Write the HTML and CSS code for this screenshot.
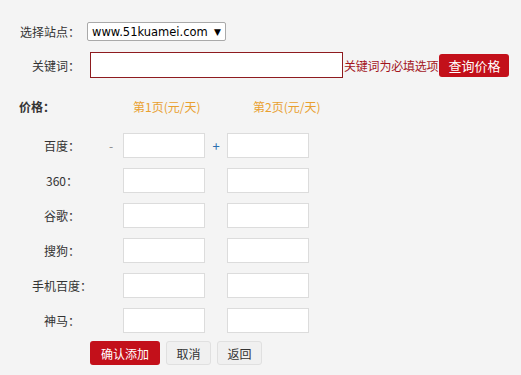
FILE: index.html
```html
<!DOCTYPE html>
<html lang="zh-CN">
<head>
    <meta charset="UTF-8">
    <title>添加关键词</title>
    <link rel="stylesheet" href="styles.css">
</head>
<body>
<div class="form">
    <div class="field site-row">
        <label class="field-label">选择站点：</label>
        <div class="select-box">
            <span>www.51kuamei.com</span>
            <span class="arrow">▼</span>
        </div>
    </div>

    <div class="field keyword-row">
        <label class="field-label">关键词：</label>
        <input type="text" class="keyword-input">
        <span class="keyword-tip">关键词为必填选项</span>
        <button class="btn btn-red btn-query">查询价格</button>
    </div>

    <div class="price-head">
        <span class="price-title">价格：</span>
        <span class="page-col">第1页(元/天)</span>
        <span class="page-col">第2页(元/天)</span>
    </div>

    <div class="price-list">
        <div class="price-row">
            <span class="engine">百度：</span>
            <span class="sign sign-first minus">-</span>
            <input type="text" class="price-input">
            <span class="sign sign-mid plus">+</span>
            <input type="text" class="price-input">
        </div>
        <div class="price-row">
            <span class="engine">360：</span>
            <span class="sign sign-first"></span>
            <input type="text" class="price-input">
            <span class="sign sign-mid"></span>
            <input type="text" class="price-input">
        </div>
        <div class="price-row">
            <span class="engine">谷歌：</span>
            <span class="sign sign-first"></span>
            <input type="text" class="price-input">
            <span class="sign sign-mid"></span>
            <input type="text" class="price-input">
        </div>
        <div class="price-row">
            <span class="engine">搜狗：</span>
            <span class="sign sign-first"></span>
            <input type="text" class="price-input">
            <span class="sign sign-mid"></span>
            <input type="text" class="price-input">
        </div>
        <div class="price-row">
            <span class="engine">手机百度：</span>
            <span class="sign sign-first"></span>
            <input type="text" class="price-input">
            <span class="sign sign-mid"></span>
            <input type="text" class="price-input">
        </div>
        <div class="price-row">
            <span class="engine">神马：</span>
            <span class="sign sign-first"></span>
            <input type="text" class="price-input">
            <span class="sign sign-mid"></span>
            <input type="text" class="price-input">
        </div>
    </div>

    <div class="actions">
        <button class="btn btn-red btn-add">确认添加</button>
        <button class="btn btn-gray">取消</button>
        <button class="btn btn-gray">返回</button>
    </div>
</div>
</body>
</html>
```

FILE: styles.css
```css
body {
    margin: 0;
    background-color: #f4f4f4;
    font-family: "Noto Sans CJK SC", "DejaVu Sans", sans-serif;
    font-size: 12px;
    color: #333;
}
.form {
    padding-top: 22px;
}
.field {
    display: flex;
    align-items: center;
}
.field-label {
    width: 80px;
    text-align: right;
    color: #333;
}
.select-box {
    display: flex;
    align-items: center;
    justify-content: space-between;
    box-sizing: border-box;
    width: 139px;
    height: 19px;
    margin-left: 7px;
    padding: 0 4px;
    background-color: #fff;
    border: 1px solid #a9a9a9;
    border-radius: 2px;
    font-family: "DejaVu Sans", sans-serif;
    font-size: 11.5px;
    color: #000;
}
.select-box .arrow {
    font-size: 9px;
}
.keyword-row {
    margin-top: 11px;
}
.keyword-input {
    box-sizing: border-box;
    width: 253px;
    height: 26px;
    margin: 0 0 0 10px;
    border: 1px solid #8e1b1f;
    background-color: #fff;
    outline: none;
}
.keyword-tip {
    margin-left: 1px;
    color: #a3141c;
    font-size: 12px;
    letter-spacing: -0.2px;
}
.btn {
    box-sizing: border-box;
    height: 24px;
    padding: 0;
    border-radius: 3px;
    font-family: "Noto Sans CJK SC", sans-serif;
    font-size: 12px;
    cursor: pointer;
}
.btn-red {
    background-color: #c3101a;
    color: #fff;
    border: none;
}
.btn-query {
    width: 70px;
    height: 23px;
    margin-left: 1px;
    font-size: 13px;
}
.price-head {
    display: flex;
    align-items: center;
    margin-top: 20px;
    height: 16px;
}
.price-title {
    width: 114px;
    padding-left: 19px;
    font-weight: bold;
    color: #333;
}
.page-col {
    width: 120px;
    color: #e9a02f;
}
.price-list {
    display: flex;
    flex-direction: column;
    gap: 10px;
    margin-top: 19px;
}
.price-row {
    display: flex;
    align-items: center;
    height: 25px;
}
.engine {
    box-sizing: border-box;
    width: 104px;
    padding-left: 20px;
    text-align: center;
    color: #333;
}
.sign {
    box-sizing: border-box;
    text-align: center;
}
.sign-first {
    width: 19px;
    padding-right: 5px;
}
.sign-mid {
    width: 22px;
}
.minus {
    color: #888;
}
.plus {
    color: #2a6fb0;
    font-size: 13px;
}
.price-input {
    box-sizing: border-box;
    width: 82px;
    height: 25px;
    margin: 0;
    border: 1px solid #dcdcdc;
    background-color: #fff;
    outline: none;
}
.actions {
    display: flex;
    gap: 6px;
    margin-top: 8px;
    padding-left: 90px;
}
.btn-add {
    width: 70px;
}
.btn-gray {
    width: 45px;
    background-color: #f0f0f0;
    border: 1px solid #e0e0e0;
    color: #333;
}
```
